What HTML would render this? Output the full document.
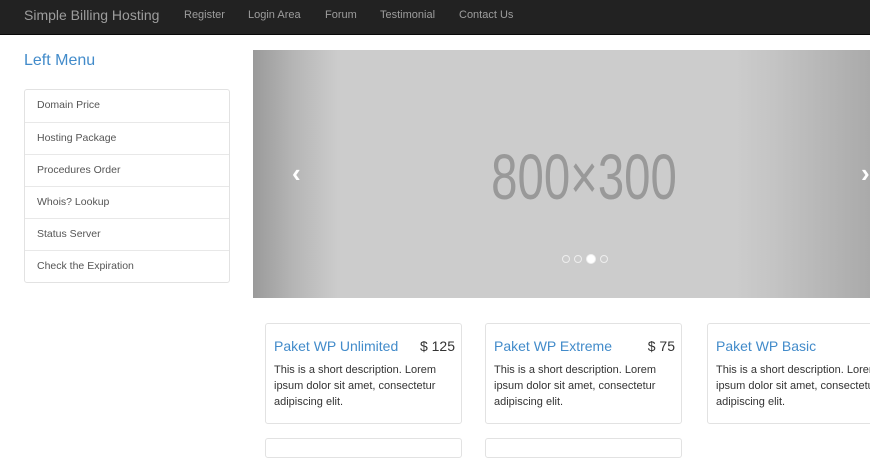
<!DOCTYPE html>
<html><head><meta charset="utf-8"><style>
*{margin:0;padding:0;box-sizing:border-box}
body{width:870px;height:442px;overflow:hidden;background:#fff;font-family:"Liberation Sans",sans-serif;position:relative}
.nav{position:absolute;left:0;top:0;width:870px;height:35px;background:#222;border-bottom:1px solid #080808}
.nav span{position:absolute;top:0;line-height:31px;color:#9d9d9d;font-size:11px}
.nav .brand{font-size:14px;left:24px;line-height:30px}
h3{position:absolute;left:24px;top:52px;font-size:16px;font-weight:normal;color:#428bca}
.menu{position:absolute;left:24px;top:89px;width:206px;border:1px solid #e2e2e2;border-radius:3px}
.menu div{height:32px;line-height:31px;padding-left:12px;font-size:10.5px;color:#555;border-top:1px solid #e8e8e8}
.menu div:first-child{border-top:none}
.car{position:absolute;left:253px;top:50px;width:617px;height:248px;background:linear-gradient(90deg,#9a9a9a 0,#b5b5b5 40px,#ccc 85px,#ccc 482px,#c4c4c4 520px,#aaa 617px)}
.big{position:absolute;left:131px;width:400px;top:95px;text-align:center;font-size:64px;color:#999;line-height:1;transform:scaleX(.74);font-weight:normal}
.arr{position:absolute;color:#fff;font-size:26px;font-weight:bold;top:108px}
.dots{position:absolute;top:205px;left:309px}
.dots i{position:absolute;width:8px;height:8px;border-radius:50%;border:1px solid #eee}
.card{position:absolute;top:323px;width:197px;height:101px;border:1px solid #e2e2e2;border-radius:3px}
.card h4{position:absolute;left:8px;top:14px;font-size:14px;font-weight:normal;color:#428bca}
.card b{position:absolute;right:6px;top:14px;font-size:14px;font-weight:normal;color:#333}
.card p{position:absolute;left:8px;top:38px;width:184px;font-size:11px;line-height:16px;color:#333}
.card2{position:absolute;top:438px;width:197px;height:20px;border:1px solid #e2e2e2;border-radius:3px}
</style></head><body>
<div class="nav"><span class="brand">Simple Billing Hosting</span><span style="left:184px">Register</span><span style="left:248px">Login Area</span><span style="left:325px">Forum</span><span style="left:380px">Testimonial</span><span style="left:459px">Contact Us</span></div>
<h3>Left Menu</h3>
<div class="menu"><div>Domain Price</div><div>Hosting Package</div><div>Procedures Order</div><div>Whois? Lookup</div><div>Status Server</div><div>Check the Expiration</div></div>
<div class="car"><div class="big">800×300</div><div class="arr" style="left:39px">&#8249;</div><div class="arr" style="left:608px">&#8250;</div>
<div class="dots"><i style="left:0"></i><i style="left:12px"></i><i style="left:24px;background:#fff;width:10px;height:10px;top:-1px"></i><i style="left:38px"></i></div></div>
<div class="card" style="left:265px"><h4>Paket WP Unlimited</h4><b>$ 125</b><p>This is a short description. Lorem ipsum dolor sit amet, consectetur adipiscing elit.</p></div>
<div class="card" style="left:485px"><h4>Paket WP Extreme</h4><b>$ 75</b><p>This is a short description. Lorem ipsum dolor sit amet, consectetur adipiscing elit.</p></div>
<div class="card" style="left:707px;width:200px"><h4>Paket WP Basic</h4><p>This is a short description. Lorem ipsum dolor sit amet, consectetur adipiscing elit.</p></div>
<div class="card2" style="left:265px"></div><div class="card2" style="left:485px"></div>
</body></html>
